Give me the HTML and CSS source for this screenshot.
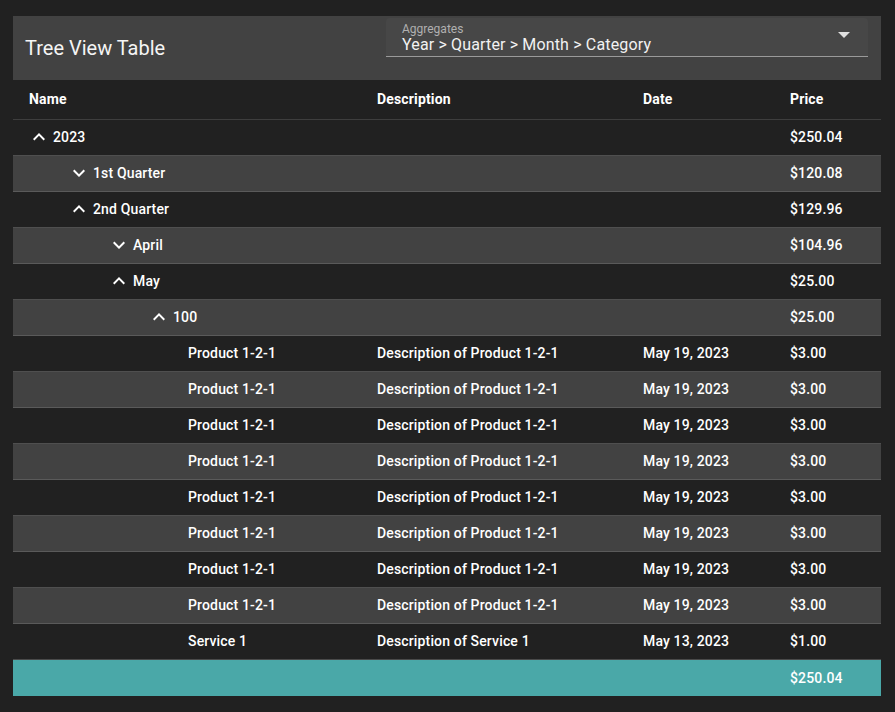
FILE: index.html
```html
<!DOCTYPE html>
<html>
<head>
<meta charset="utf-8">
<link rel="stylesheet" href="styles.css">
</head>
<body>
<div class="card">
  <div class="toolbar">
    <div class="title">Tree View Table</div>
    <div class="select">
      <div class="select-text">
        <div class="label">Aggregates</div>
        <div class="value">Year &gt; Quarter &gt; Month &gt; Category</div>
      </div>
      <svg class="arrow" width="12" height="6" viewBox="0 0 10 5"><path d="M0 0 L5 5 L10 0 Z" fill="#e0e0e0"/></svg>
    </div>
  </div>
  <div class="table">
    <div class="row head">
      <div class="c name">Name</div><div class="c desc">Description</div><div class="c date">Date</div><div class="c price">Price</div>
    </div>
    <div class="row">
      <div class="c name l0"><svg class="chev" viewBox="0 0 24 24"><path d="M7.41 15.41 12 10.83l4.59 4.58L18 14l-6-6-6 6z"/></svg>2023</div><div class="c desc"></div><div class="c date"></div><div class="c price">$250.04</div>
    </div>
    <div class="row alt">
      <div class="c name l1"><svg class="chev" viewBox="0 0 24 24"><path d="M7.41 8.59 12 13.17l4.59-4.58L18 10l-6 6-6-6z"/></svg>1st Quarter</div><div class="c desc"></div><div class="c date"></div><div class="c price">$120.08</div>
    </div>
    <div class="row">
      <div class="c name l1"><svg class="chev" viewBox="0 0 24 24"><path d="M7.41 15.41 12 10.83l4.59 4.58L18 14l-6-6-6 6z"/></svg>2nd Quarter</div><div class="c desc"></div><div class="c date"></div><div class="c price">$129.96</div>
    </div>
    <div class="row alt">
      <div class="c name l2"><svg class="chev" viewBox="0 0 24 24"><path d="M7.41 8.59 12 13.17l4.59-4.58L18 10l-6 6-6-6z"/></svg>April</div><div class="c desc"></div><div class="c date"></div><div class="c price">$104.96</div>
    </div>
    <div class="row">
      <div class="c name l2"><svg class="chev" viewBox="0 0 24 24"><path d="M7.41 15.41 12 10.83l4.59 4.58L18 14l-6-6-6 6z"/></svg>May</div><div class="c desc"></div><div class="c date"></div><div class="c price">$25.00</div>
    </div>
    <div class="row alt">
      <div class="c name l3"><svg class="chev" viewBox="0 0 24 24"><path d="M7.41 15.41 12 10.83l4.59 4.58L18 14l-6-6-6 6z"/></svg>100</div><div class="c desc"></div><div class="c date"></div><div class="c price">$25.00</div>
    </div>
    <div class="row"><div class="c name leaf">Product 1-2-1</div><div class="c desc">Description of Product 1-2-1</div><div class="c date">May 19, 2023</div><div class="c price">$3.00</div></div>
    <div class="row alt"><div class="c name leaf">Product 1-2-1</div><div class="c desc">Description of Product 1-2-1</div><div class="c date">May 19, 2023</div><div class="c price">$3.00</div></div>
    <div class="row"><div class="c name leaf">Product 1-2-1</div><div class="c desc">Description of Product 1-2-1</div><div class="c date">May 19, 2023</div><div class="c price">$3.00</div></div>
    <div class="row alt"><div class="c name leaf">Product 1-2-1</div><div class="c desc">Description of Product 1-2-1</div><div class="c date">May 19, 2023</div><div class="c price">$3.00</div></div>
    <div class="row"><div class="c name leaf">Product 1-2-1</div><div class="c desc">Description of Product 1-2-1</div><div class="c date">May 19, 2023</div><div class="c price">$3.00</div></div>
    <div class="row alt"><div class="c name leaf">Product 1-2-1</div><div class="c desc">Description of Product 1-2-1</div><div class="c date">May 19, 2023</div><div class="c price">$3.00</div></div>
    <div class="row"><div class="c name leaf">Product 1-2-1</div><div class="c desc">Description of Product 1-2-1</div><div class="c date">May 19, 2023</div><div class="c price">$3.00</div></div>
    <div class="row alt"><div class="c name leaf">Product 1-2-1</div><div class="c desc">Description of Product 1-2-1</div><div class="c date">May 19, 2023</div><div class="c price">$3.00</div></div>
    <div class="row last"><div class="c name leaf">Service 1</div><div class="c desc">Description of Service 1</div><div class="c date">May 13, 2023</div><div class="c price">$1.00</div></div>
    <div class="row total"><div class="c name"></div><div class="c desc"></div><div class="c date"></div><div class="c price">$250.04</div></div>
  </div>
</div>
</body>
</html>
```
FILE: styles.css
```css
html, body {
  margin: 0;
  padding: 0;
  background: #212121;
  font-family: Roboto, "Liberation Sans", sans-serif;
  color: #fff;
}
.card {
  margin: 16px 14px 0 13px;
  width: 868px;
}
.toolbar {
  height: 64px;
  background: #424242;
  display: flex;
  align-items: flex-start;
  padding: 0 13px 0 12px;
  box-sizing: border-box;
}
.title {
  font-size: 20px;
  line-height: 64px;
  width: 361px;
  flex: none;
  color: #f5f5f5;
}
.select {
  margin-top: 2px;
  flex: 1;
  height: 38px;
  background: #474747;
  border-radius: 4px 4px 0 0;
  border-bottom: 1px solid #9a9a9a;
  display: flex;
  align-items: center;
  padding: 0 18px 0 16px;
}
.select-text { flex: 1; padding-top: 2px; }
.label {
  font-size: 12px;
  line-height: 13px;
  color: #b0b0b0;
}
.value {
  font-size: 16px;
  line-height: 18px;
  letter-spacing: 0.15px;
  color: #f2f2f2;
}
.arrow { flex: none; margin-top: -4px; }
.row {
  display: flex;
  height: 36px;
  align-items: center;
  box-sizing: border-box;
  border-bottom: 1px solid #4f4f4f;
  padding-bottom: 1px;
  font-size: 14px;
  font-weight: 500;
  letter-spacing: 0.15px;
}
.row.alt { background: #424242; border-bottom-color: #5a5a5a; }
.row.head { height: 40px; font-weight: 700; border-bottom-color: #3e3e3e; }
.row.last { border-bottom: 1px solid #4a4a4a; }
.row.total { background: #4aa8a8; border-bottom: none; }
.c {
  box-sizing: border-box;
  padding-left: 16px;
  display: flex;
  align-items: center;
  white-space: nowrap;
}
.name { width: 348px; }
.desc { width: 266px; }
.date { width: 147px; }
.price { flex: 1; }
.chev { width: 24px; height: 24px; fill: #fff; margin-right: 2px; flex: none; }
.l0 { padding-left: 14px; }
.l1 { padding-left: 54px; }
.l2 { padding-left: 94px; }
.l3 { padding-left: 134px; }
.leaf { padding-left: 175px; }
```
